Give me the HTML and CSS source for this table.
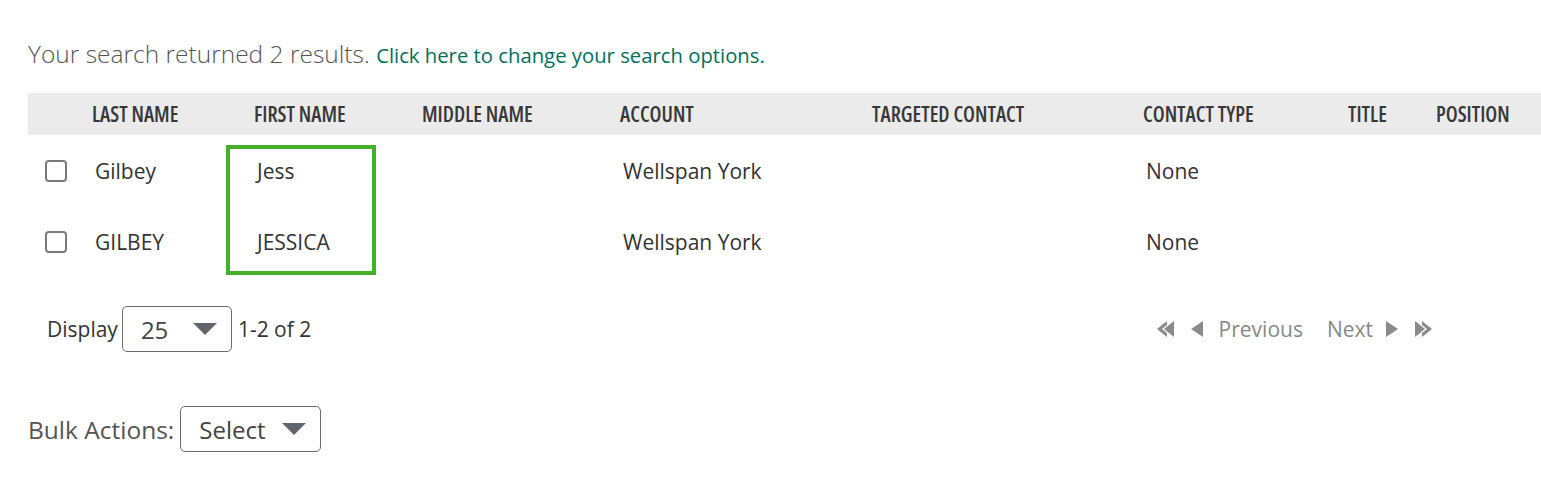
FILE: index.html
```html
<!DOCTYPE html>
<html lang="en">
<head>
<meta charset="utf-8">
<title>Search results</title>
<link rel="stylesheet" href="styles.css">
</head>
<body>
<div class="page">
  <p class="summary">Your search returned 2 results. <a class="summary-link" href="#">Click here to change your search options.</a></p>

  <div class="results">
    <div class="grid">
      <div class="hcell"></div>
      <div class="hcell">LAST NAME</div>
      <div class="hcell">FIRST NAME</div>
      <div class="hcell">MIDDLE NAME</div>
      <div class="hcell">ACCOUNT</div>
      <div class="hcell">TARGETED CONTACT</div>
      <div class="hcell">CONTACT TYPE</div>
      <div class="hcell">TITLE</div>
      <div class="hcell">POSITION</div>

      <div class="cell cb-cell"><span class="checkbox"></span></div>
      <div class="cell">Gilbey</div>
      <div class="cell">Jess</div>
      <div class="cell"></div>
      <div class="cell">Wellspan York</div>
      <div class="cell"></div>
      <div class="cell">None</div>
      <div class="cell"></div>
      <div class="cell"></div>

      <div class="cell cb-cell"><span class="checkbox"></span></div>
      <div class="cell">GILBEY</div>
      <div class="cell">JESSICA</div>
      <div class="cell"></div>
      <div class="cell">Wellspan York</div>
      <div class="cell"></div>
      <div class="cell">None</div>
      <div class="cell"></div>
      <div class="cell"></div>
    </div>
    <div class="highlight"></div>
  </div>

  <div class="pager-row">
    <div class="display">
      <span class="display-label">Display</span>
      <div class="select select-small">
        <span class="select-value">25</span>
        <svg class="caret" width="24" height="12" viewBox="0 0 24 12"><path d="M0 0H24L12 12Z" fill="#5f666d"/></svg>
      </div>
      <span class="range">1-2 of 2</span>
    </div>
    <div class="pager">
      <svg class="pg-icon" width="22" height="16" viewBox="0 0 22 16"><path d="M0 8L10 0V4L5 8L10 12V16Z M7 8L17 0V16Z" fill="#8a8a8a"/></svg>
      <svg class="pg-icon" width="12" height="16" viewBox="0 0 12 16"><path d="M0 8L12 0V16Z" fill="#8a8a8a"/></svg>
      <span class="pg-text pg-prev">Previous</span>
      <span class="pg-text pg-next">Next</span>
      <svg class="pg-icon" width="12" height="16" viewBox="0 0 12 16"><path d="M12 8L0 0V16Z" fill="#8a8a8a"/></svg>
      <svg class="pg-icon" width="22" height="16" viewBox="0 0 22 16"><path d="M22 8L12 0V4L17 8L12 12V16Z M15 8L5 0V16Z" fill="#8a8a8a"/></svg>
    </div>
  </div>

  <div class="bulk">
    <span class="bulk-label">Bulk Actions:</span>
    <div class="select select-bulk">
      <span class="select-value">Select</span>
      <svg class="caret" width="24" height="12" viewBox="0 0 24 12"><path d="M0 0H24L12 12Z" fill="#5f666d"/></svg>
    </div>
  </div>
</div>
</body>
</html>
```

FILE: styles.css
```css
* { box-sizing: border-box; }

html, body {
  margin: 0;
  padding: 0;
  background: #ffffff;
}

body {
  font-family: "Open Sans", "Liberation Sans", sans-serif;
  color: #333333;
}

.page {
  padding: 39px 0 0 28px;
  width: 1541px;
}

.summary {
  margin: 0;
  height: 30px;
  line-height: 30px;
  font-size: 24.5px;
  font-weight: 300;
  color: #555555;
}

.summary-link {
  font-size: 20.3px;
  font-weight: 400;
  color: #00705a;
  text-decoration: none;
}

.results {
  position: relative;
  margin-top: 24px;
}

.grid {
  display: grid;
  grid-template-columns: 64px 162px 168px 198px 252px 271px 205px 88px 1fr;
  grid-template-rows: 42px 71px 70px;
}

.hcell {
  background: #ebebeb;
  font-size: 21px;
  font-weight: 600;
  font-stretch: condensed;
  color: #383838;
  display: flex;
  align-items: center;
  white-space: nowrap;
}

.cell {
  display: flex;
  align-items: center;
  padding-left: 3px;
  padding-top: 1px;
  font-size: 21px;
  color: #333333;
  white-space: nowrap;
}

.cb-cell {
  padding-left: 17px;
}

.checkbox {
  width: 22px;
  height: 22px;
  border: 2px solid #7a7a7a;
  border-radius: 4px;
  background: #ffffff;
}

.highlight {
  position: absolute;
  left: 198px;
  top: 52px;
  width: 150px;
  height: 130px;
  border: 4px solid #43b02a;
  pointer-events: none;
}

.pager-row {
  display: flex;
  align-items: center;
  justify-content: space-between;
  margin-top: 30px;
  width: 1404px;
}

.display {
  display: flex;
  align-items: center;
  padding-left: 19px;
  font-size: 21px;
  color: #333333;
}

.display-label {
  margin-right: 4px;
}

.select {
  display: flex;
  align-items: center;
  justify-content: space-between;
  height: 46px;
  border: 1px solid #6b6b6b;
  border-radius: 5px;
  font-size: 24px;
  color: #444444;
  background: #ffffff;
}

.select-small {
  width: 110px;
  padding: 0 14px 0 18px;
}

.range {
  margin-left: 6px;
}

.pager {
  display: flex;
  align-items: center;
  font-size: 21px;
  color: #888888;
}

.pg-icon {
  display: block;
}

.pg-icon + .pg-icon {
  margin-left: 12px;
}

.pg-prev {
  margin-left: 16px;
}

.pg-next {
  margin-left: 24px;
  margin-right: 13px;
}

.bulk {
  display: flex;
  align-items: center;
  margin-top: 54px;
  font-size: 24.5px;
  color: #555555;
}

.bulk-label {
  margin-right: 6px;
}

.select-bulk {
  width: 141px;
  padding: 0 14px 0 18px;
}
```
